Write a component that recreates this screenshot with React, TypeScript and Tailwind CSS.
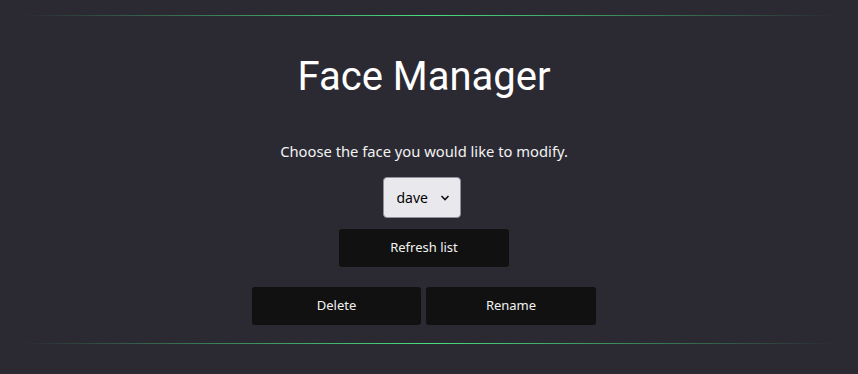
import React, { useState } from 'react'

const faces = ['dave', 'anna', 'mike']

const App: React.FC = () => {
  const [face, setFace] = useState('dave')

  return (
    <div className="min-h-[374px] w-full bg-[#2b2a33] pt-[15px] text-white" style={{ fontFamily: '"Noto Sans", sans-serif' }}>
      {/* Top divider */}
      <div className="mx-[23px] h-px bg-gradient-to-r from-transparent via-[#4ade80] to-transparent" />

      <div className="flex flex-col items-center pr-[10px]">
        <h1 className="mt-[37px] text-[40px] leading-[48px] font-normal text-white" style={{ fontFamily: 'Roboto, sans-serif' }}>
          Face Manager
        </h1>

        <p className="mt-[40px] text-[14.75px] leading-5 text-[#f2f2f2]">Choose the face you would like to modify.</p>

        {/* Face select */}
        <div className="relative mt-[16px] mr-[5px]">
          <select
            value={face}
            onChange={(e) => setFace(e.target.value)}
            className="h-[41px] w-[78px] appearance-none rounded-[4px] border border-[#8f8f9d] bg-[#e9e9ed] pl-[13px] text-[14px] text-black outline-none"
          >
            {faces.map((f) => (
              <option key={f} value={f}>{f}</option>
            ))}
          </select>
          <svg className="pointer-events-none absolute right-[11px] top-[17px] h-[8px] w-[10px]" viewBox="0 0 10 8" fill="none" stroke="#111" strokeWidth={1.6}>
            <path d="M1.5 2l3.5 3.5L8.5 2" />
          </svg>
        </div>

        <button type="button" className="mt-[11px] h-[38px] w-[170px] rounded-[3px] bg-[#111111] text-[13px] text-[#f2f2f2]">
          Refresh list
        </button>

        <div className="mt-[20px] flex gap-[5px]">
          <button type="button" className="h-[38px] w-[169px] rounded-[3px] bg-[#111111] text-[13px] text-[#f2f2f2]">
            Delete
          </button>
          <button type="button" className="h-[38px] w-[170px] rounded-[3px] bg-[#111111] text-[13px] text-[#f2f2f2]">
            Rename
          </button>
        </div>
      </div>

      {/* Bottom divider */}
      <div className="mx-[23px] mt-[18px] h-px bg-gradient-to-r from-transparent via-[#4ade80] to-transparent" />
    </div>
  )
}

export default App
